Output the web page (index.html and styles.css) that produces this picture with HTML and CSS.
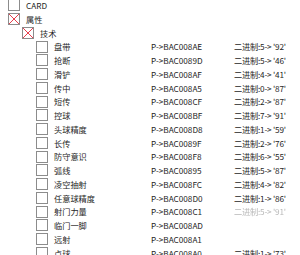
FILE: index.html
```
<!DOCTYPE html>
<html>
<head>
    <meta charset="utf-8">
    <title>Card Tree</title>
    <link rel="stylesheet" href="styles.css">
</head>
<body>
    <div class="tree">
        <div class="row"><div class="name lv0"><span class="box"></span>CARD</div><div></div><div></div></div>
        <div class="row"><div class="name lv0"><span class="box x"></span>属性</div><div></div><div></div></div>
        <div class="row"><div class="name lv1"><span class="box x"></span>技术</div><div></div><div></div></div>
        <div class="row"><div class="name lv2"><span class="box"></span>盘带</div><div class="addr">P-&gt;BAC008AE</div><div class="val">二进制:5-&gt; '92'</div></div>
        <div class="row"><div class="name lv2"><span class="box"></span>抢断</div><div class="addr">P-&gt;BAC0089D</div><div class="val">二进制:5-&gt; '46'</div></div>
        <div class="row"><div class="name lv2"><span class="box"></span>滑铲</div><div class="addr">P-&gt;BAC008AF</div><div class="val">二进制:4-&gt; '41'</div></div>
        <div class="row"><div class="name lv2"><span class="box"></span>传中</div><div class="addr">P-&gt;BAC008A5</div><div class="val">二进制:0-&gt; '87'</div></div>
        <div class="row"><div class="name lv2"><span class="box"></span>短传</div><div class="addr">P-&gt;BAC008CF</div><div class="val">二进制:2-&gt; '87'</div></div>
        <div class="row"><div class="name lv2"><span class="box"></span>控球</div><div class="addr">P-&gt;BAC008BF</div><div class="val">二进制:7-&gt; '91'</div></div>
        <div class="row"><div class="name lv2"><span class="box"></span>头球精度</div><div class="addr">P-&gt;BAC008D8</div><div class="val">二进制:1-&gt; '59'</div></div>
        <div class="row"><div class="name lv2"><span class="box"></span>长传</div><div class="addr">P-&gt;BAC0089F</div><div class="val">二进制:2-&gt; '76'</div></div>
        <div class="row"><div class="name lv2"><span class="box"></span>防守意识</div><div class="addr">P-&gt;BAC008F8</div><div class="val">二进制:6-&gt; '55'</div></div>
        <div class="row"><div class="name lv2"><span class="box"></span>弧线</div><div class="addr">P-&gt;BAC00895</div><div class="val">二进制:5-&gt; '87'</div></div>
        <div class="row"><div class="name lv2"><span class="box"></span>凌空抽射</div><div class="addr">P-&gt;BAC008FC</div><div class="val">二进制:4-&gt; '82'</div></div>
        <div class="row"><div class="name lv2"><span class="box"></span>任意球精度</div><div class="addr">P-&gt;BAC008D0</div><div class="val">二进制:1-&gt; '86'</div></div>
        <div class="row"><div class="name lv2"><span class="box"></span>射门力量</div><div class="addr">P-&gt;BAC008C1</div><div class="val faded">二进制:5-&gt; '91'</div></div>
        <div class="row"><div class="name lv2"><span class="box"></span>临门一脚</div><div class="addr">P-&gt;BAC008AD</div><div class="val"></div></div>
        <div class="row"><div class="name lv2"><span class="box"></span>远射</div><div class="addr">P-&gt;BAC008A1</div><div class="val"></div></div>
        <div class="row"><div class="name lv2"><span class="box"></span>点球</div><div class="addr">P-&gt;BAC008A0</div><div class="val">二进制:1-&gt; '73'</div></div>
    </div>
</body>
</html>
```

FILE: styles.css
```
body
{
    margin: 0;
    background-color: #fff;
    color: #262626;
    font-family: "Noto Sans CJK SC", "Noto Sans", sans-serif;
    font-size: 8.2px;
    overflow: hidden;
}
.tree
{
    margin-top: -2px;
}
.row
{
    display: grid;
    grid-template-columns: 151px 83px 1fr;
    height: 13.75px;
    line-height: 14.5px;
    white-space: nowrap;
}
.name
{
    display: flex;
    align-items: center;
    gap: 6px;
}
.lv0
{
    padding-left: 8px;
}
.lv1
{
    padding-left: 22px;
}
.lv2
{
    padding-left: 36px;
}
.box
{
    width: 10px;
    height: 10px;
    border: 1px solid #8c8c8c;
    flex: none;
}
.box.x
{
    background:
        linear-gradient(45deg, transparent calc(50% - 0.7px), #e8404e calc(50% - 0.7px), #e8404e calc(50% + 0.7px), transparent calc(50% + 0.7px)),
        linear-gradient(-45deg, transparent calc(50% - 0.7px), #e8404e calc(50% - 0.7px), #e8404e calc(50% + 0.7px), transparent calc(50% + 0.7px));
}
.val
{
    letter-spacing: -0.2px;
}
.faded
{
    color: #b8b8b8;
    filter: blur(0.6px);
}
```
